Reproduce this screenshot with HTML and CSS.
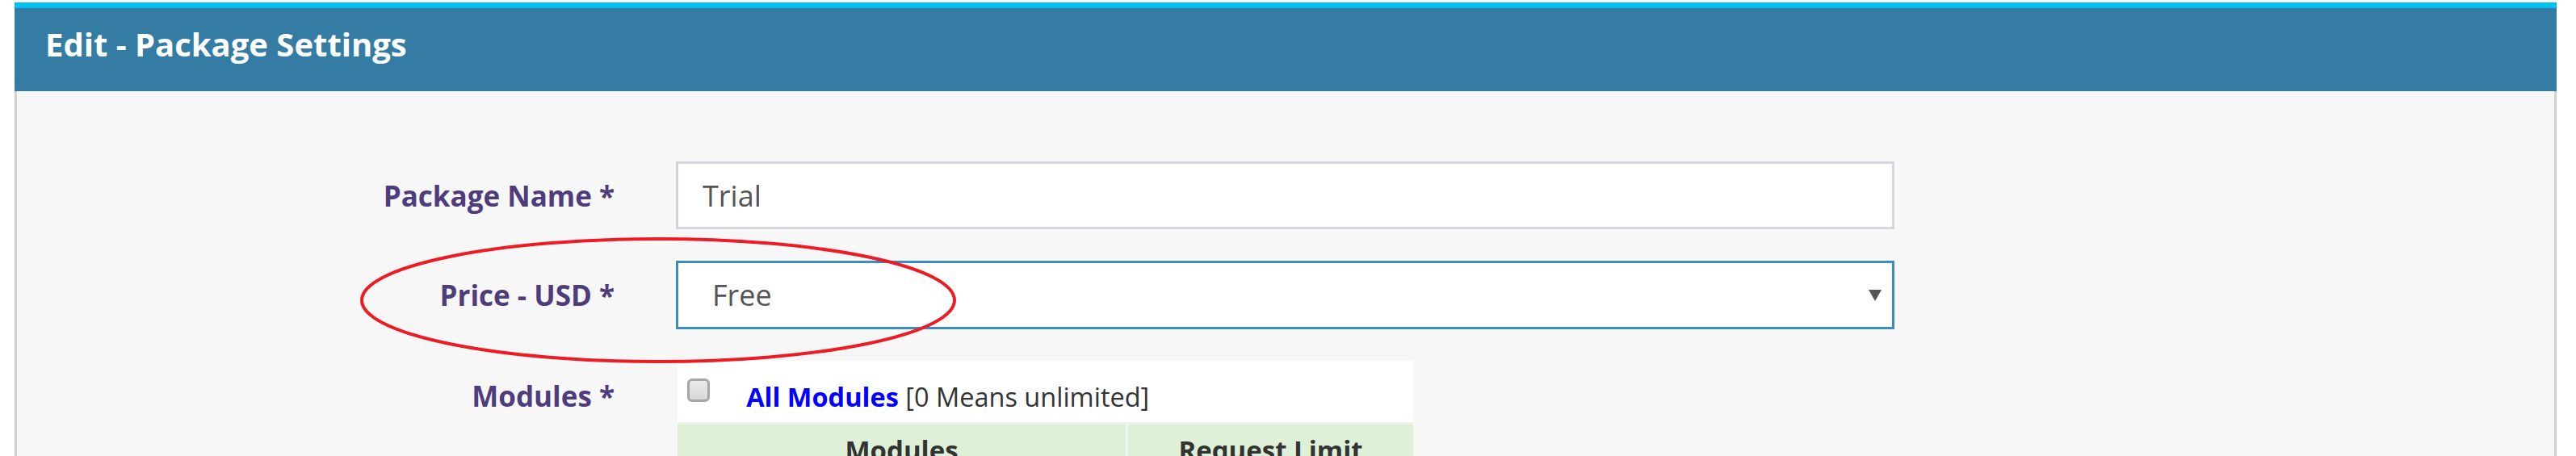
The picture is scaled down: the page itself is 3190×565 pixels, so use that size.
FILE: index.html
```html
<!DOCTYPE html>
<html lang="en">
<head>
<meta charset="utf-8">
<title>Edit - Package Settings</title>
<link rel="stylesheet" href="styles.css">
</head>
<body>
<div class="panel">
  <div class="panel-header">
    <h3 class="panel-title">Edit - Package Settings</h3>
  </div>
  <div class="panel-body">
    <div class="form-row">
      <label class="form-label">Package Name *</label>
      <div class="text-input">Trial</div>
    </div>
    <div class="form-row">
      <label class="form-label">Price - USD *</label>
      <div class="select-input">
        <span class="select-value">Free</span>
        <span class="caret"></span>
      </div>
    </div>
    <div class="form-row form-row-top">
      <label class="form-label">Modules *</label>
      <table class="modules-table">
        <tr>
          <td class="all-cell" colspan="2">
            <span class="fake-check"></span>
            <span class="all-text"><a class="all-link">All Modules</a> [0 Means unlimited]</span>
          </td>
        </tr>
        <tr class="head-row">
          <th class="col-module">Modules</th>
          <th class="col-limit">Request Limit</th>
        </tr>
      </table>
    </div>
    <svg class="highlight" width="750" height="166" viewBox="0 0 750 166">
      <ellipse cx="375" cy="83" rx="367" ry="76" fill="none" stroke="#ed1c24" stroke-width="4"/>
    </svg>
  </div>
</div>
</body>
</html>
```
FILE: styles.css
```css
html, body {
  margin: 0;
  padding: 0;
  background: #ffffff;
  font-family: "Open Sans", "Liberation Sans", sans-serif;
}

.panel {
  margin: 3px 0 0 18px;
  width: 3148px;
  border-top: 7px solid #00c0ef;
}

.panel-header {
  background: #357ca5;
  height: 103px;
  box-sizing: border-box;
  padding: 21px 0 0 38px;
}

.panel-title {
  margin: 0;
  color: #ffffff;
  font-family: "Open Sans", sans-serif;
  font-weight: 700;
  font-size: 40px;
  line-height: 48px;
}

.panel-body {
  position: relative;
  background: #f7f7f7;
  border-left: 3px solid #d0d0d0;
  border-right: 3px solid #d0d0d0;
  height: 460px;
  padding-top: 87px;
  box-sizing: border-box;
  overflow: hidden;
}

.form-row {
  display: flex;
  align-items: center;
  margin-bottom: 39px;
}

.form-row-top {
  align-items: flex-start;
}

.form-label {
  width: 740px;
  margin-right: 76px;
  text-align: right;
  color: #4f3c7d;
  font-weight: 700;
  font-size: 35px;
  line-height: 51px;
}

.form-row-top .form-label {
  padding-top: 18px;
}

.text-input {
  width: 1509px;
  height: 84px;
  box-sizing: border-box;
  border: 3px solid #d2d6de;
  background: #ffffff;
  padding: 0 30px;
  display: flex;
  align-items: center;
  color: #555555;
  font-size: 36px;
  line-height: 51px;
}

.select-input {
  width: 1509px;
  height: 85px;
  box-sizing: border-box;
  border: 3px solid #3c8dbc;
  background: #ffffff;
  padding: 0 13px 0 42px;
  display: flex;
  align-items: center;
  justify-content: space-between;
  color: #555555;
  font-size: 36px;
  line-height: 51px;
}

.caret {
  width: 0;
  height: 0;
  border-left: 8px solid transparent;
  border-right: 8px solid transparent;
  border-top: 14px solid #555555;
}

.modules-table {
  margin-left: 2px;
  width: 911px;
  border-collapse: collapse;
  background: #ffffff;
}

.all-cell {
  height: 77px;
  box-sizing: border-box;
  padding: 0 0 0 12px;
  vertical-align: top;
  border-bottom: 3px solid #f0f0f0;
}

.fake-check {
  display: inline-block;
  width: 28px;
  height: 29px;
  box-sizing: border-box;
  border: 3px solid #a6a6a6;
  border-radius: 6px;
  background: linear-gradient(#e9e9e9, #d8d8d8);
  vertical-align: top;
  margin-top: 22px;
}

.all-text {
  display: inline-block;
  margin-left: 41px;
  padding-top: 22px;
  font-size: 32.5px;
  line-height: 46px;
  color: #333333;
}

.all-link {
  color: #0000ff;
  font-weight: 700;
}

.head-row th {
  background: #dff0d8;
  color: #333333;
  font-size: 33px;
  font-weight: 700;
  line-height: 46px;
  padding: 9px 10px 12px;
  text-align: center;
}

.col-module {
  width: 535px;
  border-right: 3px solid #f4f4f4;
}

.highlight {
  position: absolute;
  left: 419px;
  top: 176px;
}
```
